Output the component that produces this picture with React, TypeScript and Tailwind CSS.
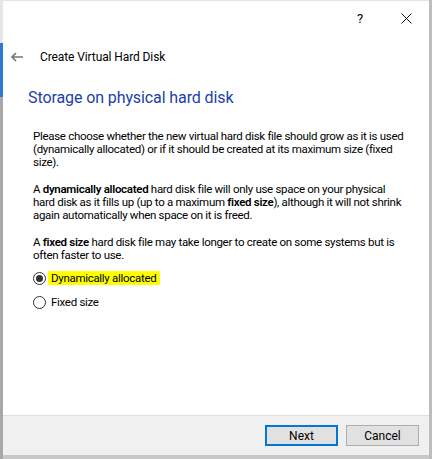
import React from 'react';

function Radio({ checked }: { checked?: boolean }) {
    return (
        <span className="w-[13px] h-[13px] rounded-full border border-[#333333] bg-white flex items-center justify-center shrink-0">
            {checked && <span className="w-[7px] h-[7px] rounded-full bg-[#333333]"></span>}
        </span>
    );
}

export default function App() {
    return (
        <div className="w-[432px] h-[459px] flex bg-[#c8c8c8] overflow-hidden font-['Roboto',sans-serif] text-[#000]">
            {/* left edge of the window behind */}
            <div className="w-[3px] flex flex-col">
                <div className="h-[43px] bg-[#e6e6e6]"></div>
                <div className="h-[54px] bg-[#2b7cd3]"></div>
                <div className="flex-1 bg-[#a8a8a8]"></div>
            </div>

            {/* dialog */}
            <div className="w-[426px] h-[455px] bg-white flex flex-col border-t border-[#e4e4e4]">
                {/* title bar */}
                <div className="h-[35px] flex items-center justify-end text-[13px]">
                    <span className="w-[46px] text-center">?</span>
                    <span className="w-[46px] flex justify-center">
                        <svg width="11" height="11" viewBox="0 0 11 11">
                            <path d="M0.5 0.5 L10.5 10.5 M10.5 0.5 L0.5 10.5" stroke="#111" strokeWidth="1" />
                        </svg>
                    </span>
                </div>

                {/* header */}
                <div className="h-[42px] flex items-center pl-[8px]">
                    <svg width="12" height="10" viewBox="0 0 12 10" className="mr-[17px]">
                        <path d="M5 1 L1 5 L5 9 M1 5 H12" stroke="#777" strokeWidth="1.6" fill="none" />
                    </svg>
                    <span className="text-[12px] tracking-[-0.1px]">Create Virtual Hard Disk</span>
                </div>

                {/* content */}
                <div className="flex-1 pl-[25px] pr-[10px] pt-[10px] whitespace-nowrap">
                    <div className="text-[16px] text-[#1c3fa8] leading-[20px] mb-[22px] tracking-[-0.1px]">Storage on physical hard disk</div>
                    <div className="pl-[5px] text-[11.5px] leading-[13px] flex flex-col gap-[14px] tracking-[-0.3px]">
                        <p>
                            Please choose whether the new virtual hard disk file should grow as it is used<br />
                            (dynamically allocated) or if it should be created at its maximum size (fixed<br />
                            size).
                        </p>
                        <p>
                            A <b className="font-semibold">dynamically allocated</b> hard disk file will only use space on your physical<br />
                            hard disk as it fills up (up to a maximum <b className="font-semibold">fixed size</b>), although it will not shrink<br />
                            again automatically when space on it is freed.
                        </p>
                        <p>
                            A <b className="font-semibold">fixed size</b> hard disk file may take longer to create on some systems but is<br />
                            often faster to use.
                        </p>
                    </div>
                    <div className="mt-[9px] flex flex-col gap-[10px] pl-[5px] text-[11.5px] tracking-[-0.3px]">
                        <label className="flex items-center gap-[2px]">
                            <Radio checked />
                            <span className="bg-[#ffff00] pl-[3px] w-[112px] h-[14px] leading-[14px]">Dynamically allocated</span>
                        </label>
                        <label className="flex items-center gap-[5px]">
                            <Radio />
                            <span className="leading-[14px]">Fixed size</span>
                        </label>
                    </div>
                </div>

                {/* footer */}
                <div className="h-[40px] bg-[#f0f0f0] border-t border-[#dfdfdf] flex items-center justify-end gap-[8px] pr-[10px]">
                    <button className="w-[73px] h-[21px] bg-[#e1e1e1] border-2 border-[#0078d7] text-[12px]">Next</button>
                    <button className="w-[73px] h-[21px] bg-[#e1e1e1] border border-[#adadad] text-[12px]">Cancel</button>
                </div>
            </div>

            {/* right edge shadow */}
            <div className="w-[3px] bg-[#bdbdbd]"></div>
        </div>
    );
}
